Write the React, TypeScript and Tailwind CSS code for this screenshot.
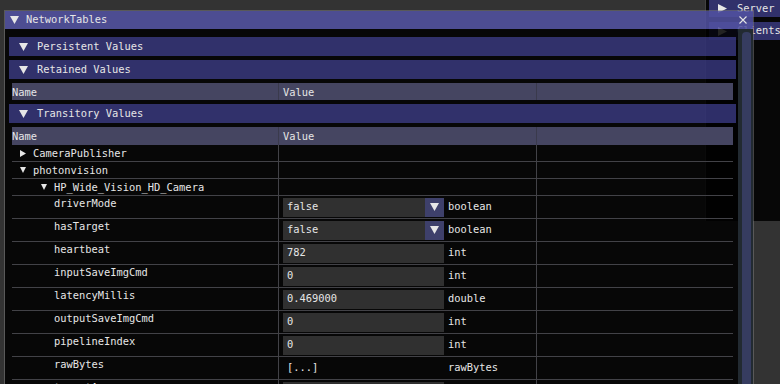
import React from 'react'

type Entry = {
  name: string
  indent: 'root' | 'child' | 'leaf'
  arrow?: 'open' | 'closed'
  kind?: 'combo' | 'input' | 'text'
  value?: string
  type?: string
}

const entries: Entry[] = [
  { name: 'CameraPublisher', indent: 'root', arrow: 'closed' },
  { name: 'photonvision', indent: 'root', arrow: 'open' },
  { name: 'HP_Wide_Vision_HD_Camera', indent: 'child', arrow: 'open' },
  { name: 'driverMode', indent: 'leaf', kind: 'combo', value: 'false', type: 'boolean' },
  { name: 'hasTarget', indent: 'leaf', kind: 'combo', value: 'false', type: 'boolean' },
  { name: 'heartbeat', indent: 'leaf', kind: 'input', value: '782', type: 'int' },
  { name: 'inputSaveImgCmd', indent: 'leaf', kind: 'input', value: '0', type: 'int' },
  { name: 'latencyMillis', indent: 'leaf', kind: 'input', value: '0.469000', type: 'double' },
  { name: 'outputSaveImgCmd', indent: 'leaf', kind: 'input', value: '0', type: 'int' },
  { name: 'pipelineIndex', indent: 'leaf', kind: 'input', value: '0', type: 'int' },
  { name: 'rawBytes', indent: 'leaf', kind: 'text', value: '[...]', type: 'rawBytes' },
  { name: 'targetArea', indent: 'leaf', kind: 'input', value: '', type: '' },
]

const Down = ({ w = 9, h = 8 }: { w?: number; h?: number }) => (
  <svg width={w} height={h} viewBox={`0 0 ${w} ${h}`} className="shrink-0">
    <polygon points={`0,0 ${w},0 ${w / 2},${h}`} fill="#e6e6e6" />
  </svg>
)

const Right = ({ w = 6, h = 7 }: { w?: number; h?: number }) => (
  <svg width={w} height={h} viewBox={`0 0 ${w} ${h}`} className="shrink-0">
    <polygon points={`0,0 ${w},${h / 2} 0,${h}`} fill="#e6e6e6" />
  </svg>
)

const Header = ({ label }: { label: string }) => (
  <div className="h-[19px] shrink-0 bg-[rgba(102,102,230,0.45)] flex items-center pl-[10px] gap-[9px]">
    <Down />
    <span>{label}</span>
  </div>
)

const TableHead = ({ tall }: { tall?: boolean }) => (
  <div className={`grid shrink-0 grid-cols-[267px_258px_1fr] bg-[#454561] leading-[16px] ${tall ? 'h-[18px]' : 'h-[17px]'}`}>
    <div className="border-r border-[#3a3a4c] flex items-center">Name</div>
    <div className="border-r border-[#3a3a4c] flex items-center pl-[4px]">Value</div>
    <div />
  </div>
)

const indentClass = { root: 'pl-[8px]', child: 'pl-[29px]', leaf: 'pl-[42px]' }

const Row = ({ e }: { e: Entry }) => {
  const big = !!e.kind
  return (
    <div className={`grid shrink-0 grid-cols-[267px_258px_1fr] border-b border-[#424247] ${big ? 'h-[23px]' : 'h-[17px]'}`}>
      <div className={`border-r border-[#424247] flex ${big ? 'items-start leading-[14px]' : 'items-center leading-[16px]'} ${indentClass[e.indent]}`}>
        {e.arrow && (
          <span className="w-[13px] flex items-center h-[16px]">
            {e.arrow === 'open' ? <Down w={6} h={6} /> : <Right />}
          </span>
        )}
        <span>{e.name}</span>
      </div>
      <div className="border-r border-[#424247] flex items-center pl-[4px]">
        {e.kind && (
          <>
            <div className={`w-[161px] h-[19px] shrink-0 flex items-center ${e.kind === 'text' ? '' : 'bg-[#303030]'}`}>
              <span className="pl-[4px]">{e.value}</span>
              {e.kind === 'combo' && (
                <span className="ml-auto w-[19px] h-full bg-[#3e406b] flex items-center justify-center">
                  <Down />
                </span>
              )}
            </div>
            <span className="ml-[4px]">{e.type}</span>
          </>
        )}
      </div>
      <div />
    </div>
  )
}

export default function App() {
  return (
    <div className="relative w-[780px] h-[384px] overflow-hidden bg-[#333333] text-[#e6e6e6] text-[10.4px] font-['DejaVu_Sans_Mono',monospace] whitespace-pre">
      {/* window behind: server / clients */}
      <div className="absolute left-[705px] top-0 w-[90px] h-[221px] bg-black/85 border-l border-[rgba(128,128,128,0.5)] pl-[3px] flex flex-col gap-[5px]">
        <div className="h-[17px] bg-[rgba(102,102,230,0.45)] flex items-center pl-[9px] gap-[10px]">
          <Right w={9} h={9} />
          <span>Server</span>
        </div>
        <div className="h-[18px] bg-[rgba(102,102,230,0.45)] flex items-center pl-[9px] gap-[10px]">
          <Right w={9} h={9} />
          <span>Clients</span>
        </div>
      </div>

      {/* NetworkTables window */}
      <div className="absolute left-[4px] top-[10px] w-[750px] h-[390px] border border-[rgba(128,128,128,0.5)] flex flex-col">
        <div className="h-[18px] shrink-0 bg-[rgba(82,82,161,0.87)] flex items-center pl-[5px] gap-[7px]">
          <Down />
          <span>NetworkTables</span>
          <svg width="8" height="8" viewBox="0 0 8 8" className="ml-auto mr-[6px]">
            <path d="M0.5 0.5 L7.5 7.5 M7.5 0.5 L0.5 7.5" stroke="#e6e6e6" strokeWidth="1.1" />
          </svg>
        </div>
        <div className="flex-1 flex bg-black/85 min-h-0">
          <div className="flex-1 pt-[8px] pl-[4px] pr-[2px] flex flex-col gap-[4px] overflow-hidden">
            <Header label="Persistent Values" />
            <Header label="Retained Values" />
            <div className="mx-[3px] shrink-0">
              <TableHead />
            </div>
            <Header label="Transitory Values" />
            <div className="mx-[3px] shrink-0 flex flex-col">
              <TableHead tall />
              {entries.map((e) => (
                <Row key={e.name} e={e} />
              ))}
            </div>
          </div>
          <div className="w-[15px] shrink-0 bg-[#222a31] pt-[3px] pl-[4px] pr-[1px]">
            <div className="w-[9px] h-full bg-[#363c60] rounded-t-[4px]" />
          </div>
        </div>
      </div>
    </div>
  )
}
